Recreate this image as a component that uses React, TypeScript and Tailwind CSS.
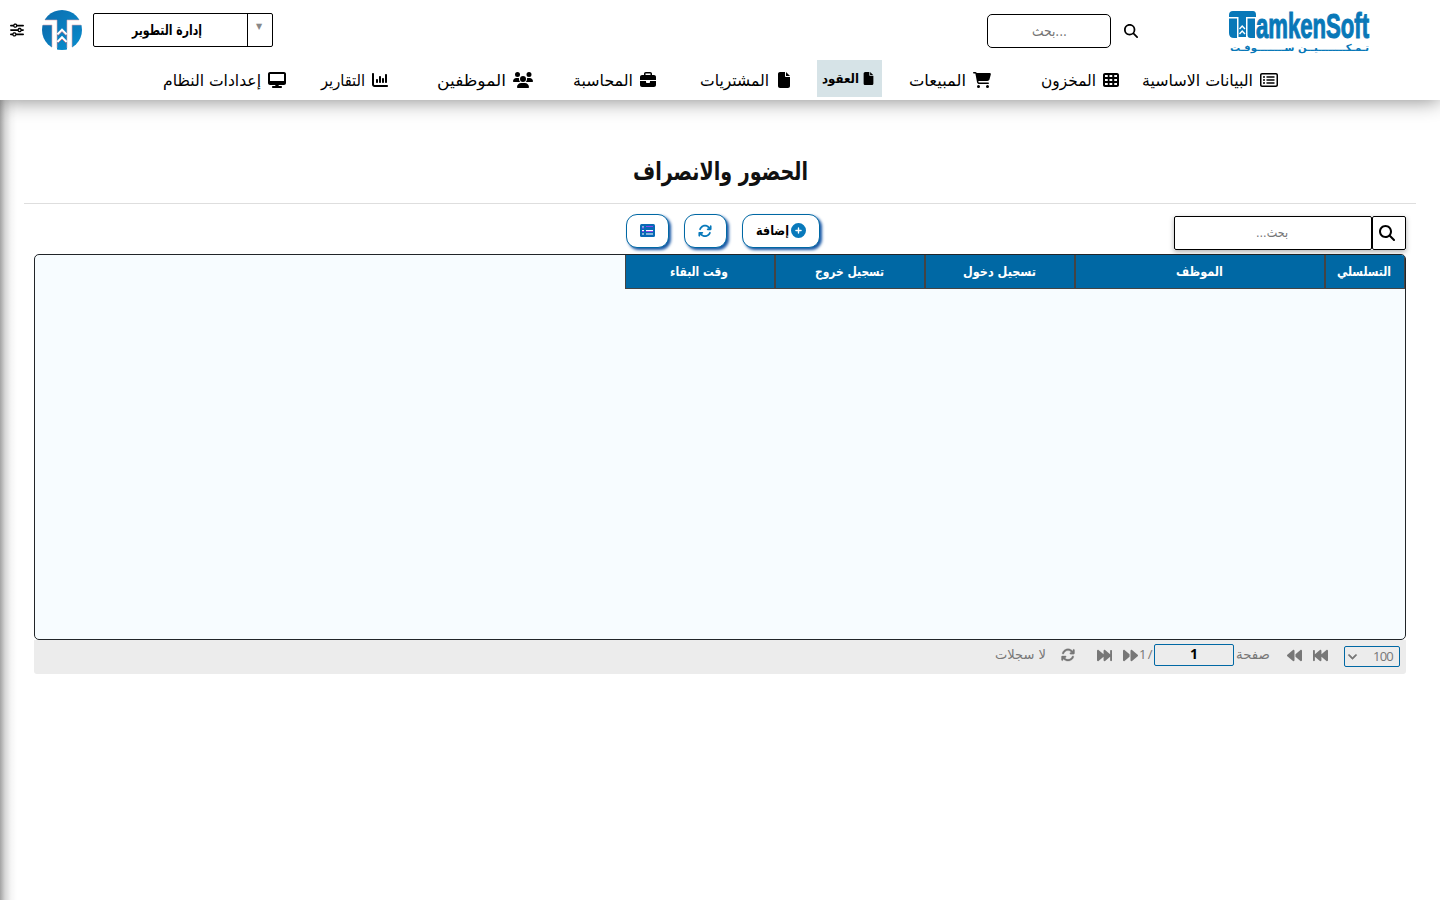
import type { ReactNode } from "react";
import type { IconType } from "react-icons";
import { FaAngleDown, FaArrowsRotate, FaBackward, FaBackwardFast, FaBriefcase, FaCartShopping, FaChartColumn, FaCirclePlus, FaDesktop, FaFile, FaForward, FaForwardFast, FaMagnifyingGlass, FaRegRectangleList, FaSliders, FaTableCells, FaUsers } from "react-icons/fa6";

type FitProps = { text: string; width: number; size: number; className?: string; dir?: "rtl" | "ltr" };

// Text with a fixed advance width, so the Arabic labels keep their measure in any fallback font.
function Fit({ text, width, size, className = "", dir = "rtl" }: FitProps) {
  return <svg className={`shrink-0 overflow-visible ${className}`} width={width} height={size} direction={dir}><text x={dir === "rtl" ? width : 0} y={size * 0.85} fontSize={size} textLength={width} lengthAdjust="spacingAndGlyphs" fill="currentColor">{text}</text></svg>;
}

type NavItem = { label: string; icon: IconType; width: number; size: number; margin: string };

const nav: NavItem[] = [
  { label: "البيانات الاساسية", icon: FaRegRectangleList, width: 111, size: 18, margin: "mr-[162px]" },
  { label: "المخزون", icon: FaTableCells, width: 55, size: 16, margin: "mr-[23px]" },
  { label: "المبيعات", icon: FaCartShopping, width: 57, size: 18, margin: "mr-[50px]" },
  { label: "العقود", icon: FaFile, width: 37, size: 13, margin: "mr-[27px]" },
  { label: "المشتريات", icon: FaFile, width: 69, size: 16, margin: "mr-[25px]" },
  { label: "المحاسبة", icon: FaBriefcase, width: 60, size: 16, margin: "mr-[44px]" },
  { label: "الموظفين", icon: FaUsers, width: 69, size: 20, margin: "mr-[40px]" },
  { label: "التقارير", icon: FaChartColumn, width: 44, size: 16, margin: "mr-[49px]" },
  { label: "إعدادات النظام", icon: FaDesktop, width: 98, size: 18, margin: "mr-[35px]" },
];

const columns = [
  { label: "التسلسلي", text: 54, className: "w-20" },
  { label: "الموظف", text: 47, className: "w-[250px]" },
  { label: "تسجيل دخول", text: 73, className: "w-[150px]" },
  { label: "تسجيل خروج", text: 69, className: "w-[150px]" },
  { label: "وقت البقاء", text: 58, className: "w-[150px]" },
];

function Emblem() {
  return <svg width="40" height="40" viewBox="0 0 40 40">
    <defs>
      <clipPath id="disc"><circle cx="20" cy="20" r="20" /></clipPath>
      <linearGradient id="sea" x1="0" x2="1" y1="0" y2="1"><stop offset="0" stopColor="#0c6cae" /><stop offset="1" stopColor="#0990d0" /></linearGradient>
    </defs>
    <g clipPath="url(#disc)" fill="url(#sea)">
      <path d="M0 0H40V10H25V40H15V10H0Z" />
      <path d="M0 15H10V40H0ZM30 15H40V40H30Z" />
    </g>
    <path d="M3 10H15V38M37 10H25V38M1 15H10V37M39 15H30V37" fill="none" stroke="#e0a4b0" strokeWidth=".6" />
    <path d="M15.500 24.500L20 20L24.500 24.500M15.500 32L20 27.500L24.500 32" fill="none" stroke="#fff" strokeWidth="2.400" />
    <path d="M15.500 26L20 21.500L24.500 26M15.500 33.500L20 29L24.500 33.500" fill="none" stroke="#c94c5b" strokeWidth=".6" />
  </svg>;
}

function Logo() {
  return <svg className="overflow-visible" width="142" height="44" viewBox="0 0 142 44" fill="#0878b8">
    <path d="M5 1H25Q28 1 28 5V7H18V27H10.500V7H1V5Q1 1 5 1Z" />
    <path d="M1 8.500H9V28H6Q1 28 1 23ZM19.500 8.500H27V28H22.500Q19.500 28 19.500 25Z" />
    <path d="M11.500 19L14.200 16L17 19M11.500 24L14.200 21L17 24" fill="none" stroke="#fff" strokeWidth="1.400" />
    <g direction="ltr" className="font-['Liberation_Sans_Narrow','Liberation_Sans',sans-serif] font-bold">
      <text x="28" y="28" fontSize="35" textLength="113" lengthAdjust="spacingAndGlyphs" stroke="#0878b8" strokeWidth="1.100">amkenSoft</text>
    </g>
    <text x="141" y="41" direction="rtl" fontWeight="700" fontSize="9.500" textLength="139" lengthAdjust="spacingAndGlyphs">تـمـكــــــــيــن ســــــــوفـت</text>
  </svg>;
}

function ListIcon() {
  return <svg width="15" height="13" viewBox="0 0 15 13">
    <rect width="15" height="13" rx="1.500" fill="#0869b5" />
    <path d="M2 3H4M2 6.500H4M2 10H4M6 6.500H13M6 10H13" stroke="#fff" strokeWidth="1.200" />
    <path d="M6 2.500H13M6 7.500H13M2 4H4M2 7.500H4" stroke="#8b45ec" strokeWidth="1" />
  </svg>;
}

function ToolButton({ children, className }: { children: ReactNode; className: string }) {
  return <button className={`flex h-[34px] items-center justify-center rounded-[11px] border border-[#0068a4] bg-white pb-px text-[#0879bb] shadow-[2px_2px_3px_#1757a5] ${className}`}>{children}</button>;
}

export default function App() {
  return <div dir="rtl" className="flex h-[900px] w-[1440px] flex-col overflow-hidden bg-white font-['DejaVu_Sans',sans-serif] text-black">
    <header className="relative z-10 h-[100px] shrink-0 bg-white shadow-[0_0_20px_rgba(0,0,0,0.5)]">
      <div className="flex h-[60px] items-start">
        <div className="mr-[70px] mt-2.5"><Logo /></div>
        <FaMagnifyingGlass className="mr-[90px] mt-6" size={14} />
        <div className="mr-[13px] mt-3.5 flex h-[34px] w-[124px] items-center justify-center rounded-[5px] border border-black text-[#757575]"><Fit text="بحث..." width={35} size={14} dir="ltr" /></div>
        <div className="mr-auto mt-[13px] flex h-[34px] w-[180px] rounded-[2px] border border-black font-bold">
          <span className="flex w-[25px] justify-center border-l border-black pr-0.5 pt-[9px] text-[8px] leading-none text-[#888]">▼</span>
          <span className="flex flex-1 items-center justify-center pb-px pr-2"><Fit text="إدارة التطوير" width={70} size={14} /></span>
        </div>
        <div className="mr-[11px] mt-2.5"><Emblem /></div>
        <FaSliders className="ml-2.5 mr-[18px] mt-[23px]" size={14} />
      </div>
      <nav className="flex h-[37px]">
        {nav.map(({ label, icon: Icon, width, size, margin }) => {
          const active = label === "العقود";
          return <a key={label} className={`flex h-[37px] items-center whitespace-nowrap ${margin} ${active ? "w-[65px] gap-[3px] bg-[#d6e3e7] pr-[7px] font-bold" : "gap-[7px] pt-[3px]"}`}>
            <Icon size={size} className="shrink-0" /><Fit text={label} width={width} size={active ? 13 : 16} />
          </a>;
        })}
      </nav>
    </header>

    <main className="flex flex-1 flex-col bg-[linear-gradient(to_right,rgba(0,0,0,0.36),rgba(0,0,0,0.16)_5px,rgba(0,0,0,0.04)_11px,transparent_17px)] px-6">
      <h1 className="flex h-[104px] items-end justify-center border-b border-[#dedede] pb-[19px] font-bold text-[#111]"><Fit text="الحضور والانصراف" width={175} size={25} /></h1>
      <section className="px-2.5">
        <div className="flex h-[50px] items-start">
          <div className="mt-3 flex shadow-[0_2px_5px_rgba(0,0,0,0.3)]">
            <button className="flex h-[34px] w-[34px] items-center justify-center rounded-[2px] border border-black bg-white pb-px pr-1"><FaMagnifyingGlass size={16} /></button>
            <div className="flex h-[34px] w-[198px] items-center justify-center rounded-[2px] border border-black bg-white pb-0.5 pr-0.5 text-[#757575]"><Fit text="بحث..." width={32} size={13} /></div>
          </div>
          <div className="mr-[354px] mt-2.5 flex gap-[15px]">
            <ToolButton className="w-[78px] gap-0.5"><FaCirclePlus size={15} /><Fit text="إضافة" width={33} size={13} className="font-bold text-black" /></ToolButton>
            <ToolButton className="w-[43px] pr-px"><FaArrowsRotate size={14} /></ToolButton>
            <ToolButton className="w-[43px]"><ListIcon /></ToolButton>
          </div>
        </div>
        <div className="h-[386px] overflow-hidden rounded-[5px] border border-[#212529] bg-[#f7fcff]">
          <div className="flex h-[34px] text-white">
            {columns.map(({ label, text, className }) => <div key={label} className={`flex shrink-0 items-center justify-center border border-t-0 border-[#444] bg-[#0068a4] pr-0.5 font-bold ${className}`}><Fit text={label} width={text} size={13} /></div>)}
          </div>
        </div>
        <footer className="flex h-[34px] items-start rounded-b-[3px] bg-[#ececec] text-[#777]">
          <div className="mr-1.5 mt-1.5 flex h-[21px] w-14 items-center justify-between rounded-[2px] border border-[#0068a4] pl-0.5 pr-1.5 font-['Open_Sans',sans-serif] text-[13px]"><span className="tracking-[-0.8px]">100</span><FaAngleDown size={11} strokeWidth={30} /></div>
          <FaBackwardFast className="mr-4 mt-2" size={15} />
          <FaBackward className="mr-[11px] mt-2" size={15} />
          <Fit text="صفحة" width={34} size={13} className="mr-[17px] mt-2" />
          <div className="mr-0.5 mt-1 flex h-[22px] w-20 items-center justify-center rounded-[2px] border border-[#0068a4] pb-0.5 font-['Open_Sans',sans-serif] text-sm font-bold text-black">1</div>
          <span dir="ltr" className="mr-[3px] mt-1 w-[12px] whitespace-nowrap font-['Open_Sans',sans-serif] text-[13px] leading-[20px] tracking-[-1px]">1 /</span>
          <FaForward className="mr-px mt-2" size={15} />
          <FaForwardFast className="mr-[11px] mt-2" size={15} />
          <FaArrowsRotate className="mr-[22px] mt-2" size={14} strokeWidth={10} />
          <Fit text="لا سجلات" width={51} size={13} className="mr-[15px] mt-2" />
        </footer>
      </section>
    </main>
  </div>;
}
